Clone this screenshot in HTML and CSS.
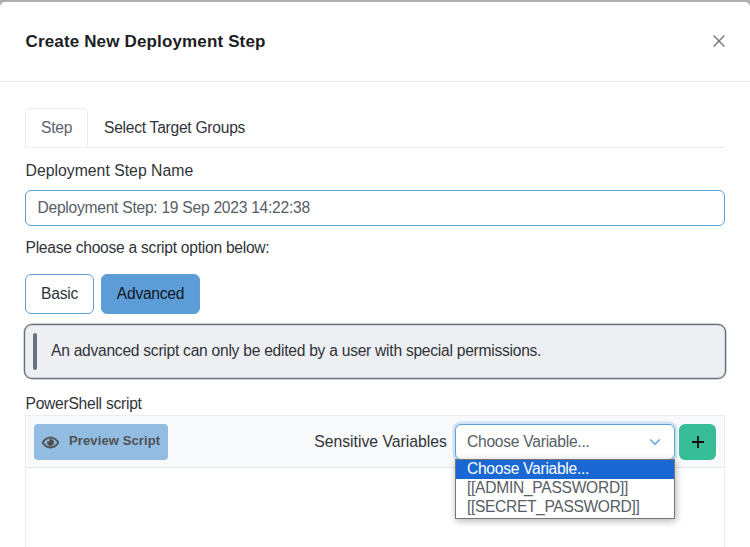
FILE: index.html
```html
<!DOCTYPE html>
<html lang="en">
<head>
<meta charset="utf-8">
<title>Create New Deployment Step</title>
<link rel="stylesheet" href="styles.css">
</head>
<body>
<main class="modal">
  <header class="modal-header">
    <h1 class="title">Create New Deployment Step</h1>
    <svg class="close" viewBox="0 0 12 12"><path d="M.6.6 11.4 11.4M11.4.6.6 11.4"/></svg>
  </header>
  <section class="modal-body">
    <nav class="tabs">
      <a class="tab active">Step</a>
      <a class="tab">Select Target Groups</a>
    </nav>
    <div class="label name-label">Deployment Step Name</div>
    <div class="input">Deployment Step: 19 Sep 2023 14:22:38</div>
    <div class="label option-label">Please choose a script option below:</div>
    <div class="options">
      <button class="option basic">Basic</button>
      <button class="option advanced">Advanced</button>
    </div>
    <div class="alert"><i class="alert-bar"></i><span>An advanced script can only be edited by a user with special permissions.</span></div>
    <div class="label script-label">PowerShell script</div>
    <div class="editor">
      <div class="toolbar">
        <button class="preview">
          <svg class="eye" viewBox="0 0 576 512"><path d="M288 144a110.94 110.94 0 0 0-31.24 5 55.4 55.4 0 0 1 7.24 27 56 56 0 0 1-56 56 55.4 55.4 0 0 1-27-7.24A111.71 111.71 0 1 0 288 144zm284.52 97.4C518.29 135.59 410.93 64 288 64S57.68 135.64 3.48 241.41a32.35 32.35 0 0 0 0 29.19C57.71 376.41 165.07 448 288 448s230.32-71.64 284.52-177.41a32.35 32.35 0 0 0 0-29.19zM288 400c-98.65 0-189.09-55-237.93-144C98.91 167 189.34 112 288 112s189.09 55 237.93 144C477.1 345 386.66 400 288 400z"/></svg>
          <span>Preview Script</span>
        </button>
        <span class="variables-label">Sensitive Variables</span>
        <div class="select">
          <span>Choose Variable...</span>
          <svg class="chevron" viewBox="0 0 12 8"><path d="M1.2 1.4 6 6.2l4.800-4.800"/></svg>
          <div class="menu">
            <div class="item selected">Choose Variable...</div>
            <div class="item">[[ADMIN_PASSWORD]]</div>
            <div class="item secret">[[SECRET_PASSWORD]]</div>
          </div>
        </div>
        <button class="add"><svg viewBox="0 0 12 12"><path d="M6 0v12M0 6h12"/></svg></button>
      </div>
    </div>
  </section>
</main>
</body>
</html>
```
FILE: styles.css
```css
* { box-sizing: border-box; }
body {
  margin: 0;
  padding-top: 2px;
  height: 547px;
  overflow: hidden;
  background: #b0aeae;
  font: 15.6px/20px "Liberation Sans", Arial, sans-serif;
  letter-spacing: -.255px;
  color: #303439;
}
button { font: inherit; letter-spacing: inherit; padding: 0; margin: 0; }
svg { display: block; flex-shrink: 0; }
.modal { height: 545px; background: #fff; border-radius: 5px 5px 0 0; }
.modal-header {
  height: 80px;
  display: flex;
  align-items: center;
  justify-content: space-between;
  padding: 0 25px 1px;
  border-bottom: 1px solid #e6e7e8;
}
.title { margin: 0; font-size: 17px; font-weight: 700; letter-spacing: .15px; color: #1b1e22; padding: 1px 0 0 .5px; }
.close { width: 12px; height: 12px; stroke: #777; stroke-width: 1.4; fill: none; }
.modal-body { padding: 26px 25px 0; }
.tabs { display: flex; height: 40px; border-bottom: 1px solid #ebecee; }
.tab { height: 40px; padding: 10px 16px 0; }
.tab.active {
  width: 63px;
  padding: 9px 0 0 15px;
  border: 1px solid #ebecee;
  border-bottom-color: #f0f1f2;
  border-radius: 5px 5px 0 0;
  color: #5c636b;
}
.label { height: 20px; padding-left: .5px; }
.name-label { margin-top: 13px; font-size: 15.8px; letter-spacing: 0; }
.input {
  height: 36px;
  margin-top: 9px;
  padding: 7px 11.500px;
  border: 1px solid #5d9fda;
  border-radius: 6px;
  color: #575e65;
}
.option-label { margin-top: 12px; }
.options { display: flex; gap: 7px; margin-top: 16px; }
.option { height: 40px; border: 1px solid #5d9fda; border-radius: 6px; background: #fff; color: #303439; }
.basic { width: 69px; }
.advanced { width: 99px; background: #5c9dd8; color: #10161c; }
.alert {
  display: flex;
  align-items: center;
  height: 55px;
  margin: 10px -1px 0;
  padding-left: 7.500px;
  border: 1px solid #65707b;
  border-radius: 8px;
  box-shadow: 0 0 0 .5px #a2a9b0, inset 0 0 0 1px #d3d6da;
  background: #eeeff2;
}
.alert span { padding-bottom: 1px; }
.alert-bar { width: 4px; height: 37px; margin-right: 14.500px; border-radius: 2px; background: #6a727d; }
.script-label { margin-top: 15px; }
.editor { height: 140px; margin-top: 1px; border: 1px solid #ededf0; }
.toolbar {
  display: flex;
  align-items: center;
  height: 52px;
  padding: 0 8px;
  border-bottom: 1px solid #e5e7eb;
  background: #f8f9fb;
}
.preview {
  display: flex;
  align-items: center;
  width: 134px;
  height: 36px;
  padding: 0 0 1px 8px;
  border: 0;
  border-radius: 4px;
  background: #92bce2;
  color: #4f5153;
  font-size: 13px;
  font-weight: 700;
  letter-spacing: .12px;
  white-space: nowrap;
}
.eye { width: 17px; height: 15px; margin: 3px 10px 0 0; fill: #4d4d4a; stroke: #4d4d4a; stroke-width: 18; }
.variables-label { margin-left: auto; font-size: 15.75px; letter-spacing: 0; }
.select {
  position: relative;
  display: flex;
  align-items: center;
  justify-content: space-between;
  width: 220px;
  height: 36px;
  margin: 0 4px 0 8px;
  padding: 0 13px 0 11px;
  border: 1px solid #5d9fda;
  border-radius: 6px;
  box-shadow: 0 0 0 2.500px #cfe2f3;
  background: #fff;
  color: #575e65;
}
.chevron { width: 12px; height: 8px; fill: none; stroke: #5d9fda; stroke-width: 1.4; }
.menu {
  position: absolute;
  top: 34px;
  left: -1px;
  width: 220px;
  height: 60px;
  border: 1px solid #777;
  background: #fff;
  box-shadow: 1px 2px 7px rgba(0,0,0,.3);
}
.item { height: 19px; padding-left: 11px; line-height: 18px; letter-spacing: -.28px; }
.item.secret { letter-spacing: -.35px; }
.selected { background: #1967d2; color: #fff; }
.add { display: grid; place-items: center; width: 37px; height: 36px; border: 0; border-radius: 6px; background: #37bc98; }
.add svg { width: 12px; height: 12px; margin-top: 1px; stroke: #0b0f0e; stroke-width: 1.8; }
```
